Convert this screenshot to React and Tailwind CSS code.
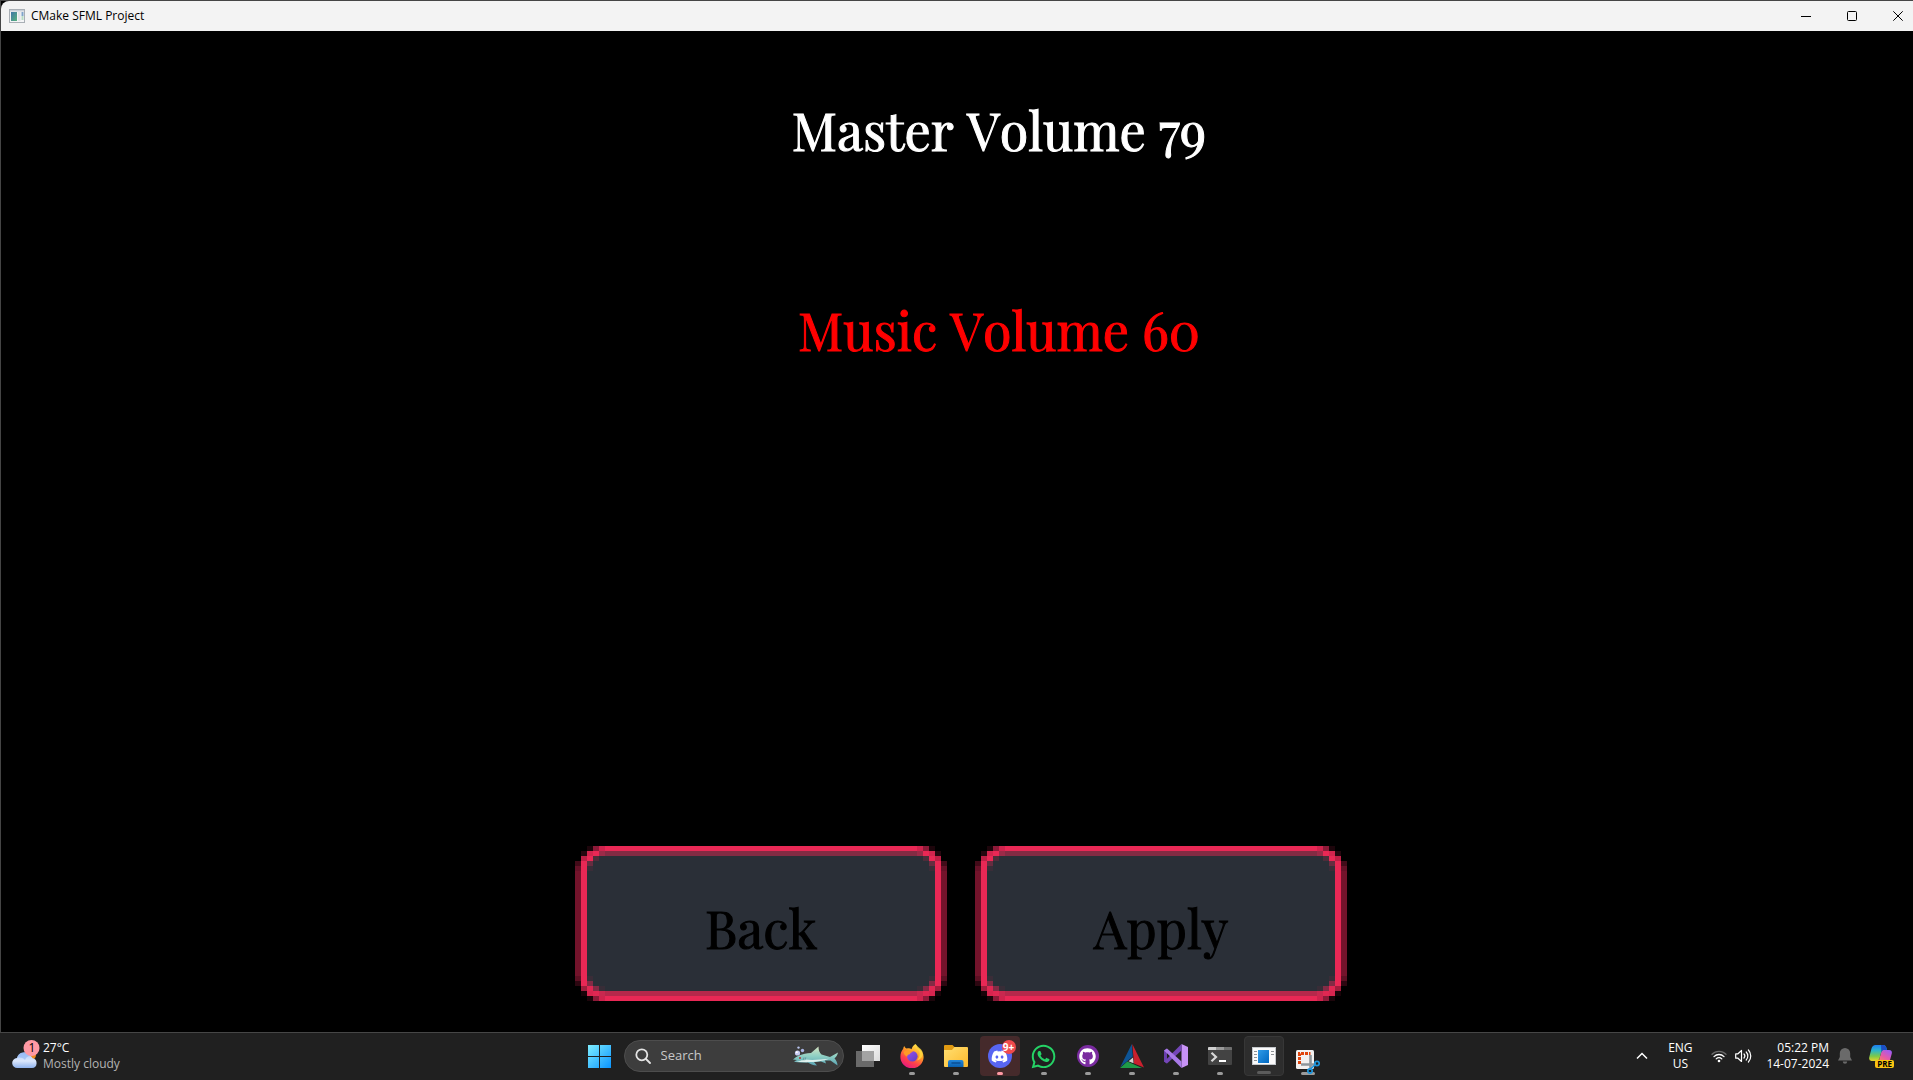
import { FaDiscord, FaGithub, FaWhatsapp } from "react-icons/fa";

const BRIGHT = "#e92855";

// Frame pixels of the left half; the right half mirrors them. [column, row, height, colour]
const EDGE = [
  [2, 0, 1, "#1d050b"], [3, 0, 1, "#8d1a38"], [4, 0, 1, "#cf234d"],
  [1, 1, 1, "#250810"], [2, 1, 1, "#d2254e"], [3, 1, 1, BRIGHT], [4, 1, 1, "#9c2a48"],
  [1, 2, 1, "#bd2046"], [2, 2, 1, BRIGHT], [3, 2, 1, "#4d2d3a"],
  [0, 3, 1, "#430b19"], [2, 3, 1, "#672d40"],
  [0, 4, 1, "#651127"], [2, 4, 1, "#3a2d38"],
  [0, 5, 21, "#73132b"], [1, 3, 25, BRIGHT],
  [0, 26, 1, "#5c1023"], [2, 26, 1, "#3a2d38"],
  [0, 27, 1, "#2d0711"], [2, 27, 1, "#832b45"],
  [1, 28, 1, "#a01d3c"], [2, 28, 1, "#e02752"], [3, 28, 1, "#832b45"], [4, 28, 1, "#382d37"],
  [1, 29, 1, "#190409"], [2, 29, 1, "#d8254f"], [3, 29, 1, "#e02752"], [4, 29, 1, "#c9284f"],
  [2, 30, 1, "#1d050b"], [3, 30, 1, "#8d1a38"], [4, 30, 1, "#cf234d"],
];

function PixelFrame() {
  return (
    <svg className="absolute inset-0 size-full" viewBox="0 0 62 31" preserveAspectRatio="none" shapeRendering="crispEdges" aria-hidden="true">
      <path d="M5 0H57V1H60V3H61V28H60V30H57V31H5V30H2V28H1V3H2V1H5Z" fill="#2a2f37" />
      <rect x="5" y="0" width="52" height="1" fill={BRIGHT} />
      <rect x="5" y="1" width="52" height="1" fill="#832b43" />
      <rect x="5" y="29" width="52" height="1" fill="#b6284b" />
      <rect x="5" y="30" width="52" height="1" fill={BRIGHT} />
      {EDGE.map(([x, y, h, c]) => (
        <g key={`${x}-${y}`} fill={c}>
          <rect x={x} y={y} width="1" height={h} />
          <rect x={61 - x} y={y} width="1" height={h} />
        </g>
      ))}
    </svg>
  );
}

function GameButton({ children }) {
  return (
    <button type="button" className="relative flex h-[155px] w-[372px] items-center justify-center pt-2 text-black">
      <PixelFrame />
      <span className="relative">{children}</span>
    </button>
  );
}

function TitleBar() {
  return (
    <header className="flex h-[30px] items-center rounded-tl-lg bg-[#f3f3f3] pl-2 text-black">
      <svg className="mr-1.5 h-[14px] w-4" viewBox="0 0 16 14" aria-hidden="true">
        <defs>
          <linearGradient id="appPane" x1="0" y1="0" x2="1" y2="1">
            <stop offset="0" stopColor="#3f76a8" />
            <stop offset="1" stopColor="#57b27c" />
          </linearGradient>
        </defs>
        <rect x=".5" y=".5" width="15" height="13" fill="#f4f5f6" stroke="#a9afb5" />
        <rect x="1" y="1" width="14" height="1.5" fill="#c9d0d8" />
        <rect x="2" y="3" width="6" height="9" fill="url(#appPane)" />
        <rect x="9" y="3" width="2.5" height="9" fill="#e2e5e8" />
        <rect x="12.5" y="3" width="2" height="4" fill="#7fa3c9" />
        <rect x="12.5" y="7" width="2" height="4" fill="#b7dcc3" />
      </svg>
      <h1 className="flex-1 text-xs">CMake SFML Project</h1>
      <div className="flex h-full gap-4">
        <button type="button" aria-label="Minimize" className="flex w-[30px] items-center justify-center">
          <svg width="10" height="10" viewBox="0 0 10 10" fill="none" stroke="#000"><path d="M0 5.5H10" /></svg>
        </button>
        <button type="button" aria-label="Maximize" className="flex w-[30px] items-center justify-center">
          <svg width="10" height="10" viewBox="0 0 10 10" fill="none" stroke="#000"><rect x=".5" y=".5" width="9" height="9" rx="1" /></svg>
        </button>
        <button type="button" aria-label="Close" className="flex w-[30px] items-center justify-center">
          <svg width="10" height="10" viewBox="0 0 10 10" fill="none" stroke="#000"><path d="M.3.3l9.4 9.4M9.7.3L.3 9.7" /></svg>
        </button>
      </div>
    </header>
  );
}

function WeatherIcon() {
  return (
    <svg width="28" height="32" viewBox="0 0 28 32" aria-hidden="true">
      <defs>
        <linearGradient id="cloud" x1="0" y1="0" x2="0" y2="1">
          <stop offset="0" stopColor="#a9caff" />
          <stop offset=".55" stopColor="#dbe7fb" />
          <stop offset="1" stopColor="#8fb3ee" />
        </linearGradient>
      </defs>
      <circle cx="19" cy="15" r="5" fill="#f08a1d" />
      <path d="M5.5 28a5 5 0 0 1-.6-10A7.5 7.5 0 0 1 18.6 16a5 5 0 0 1 2 2.3A4.9 4.9 0 0 1 20 28Z" fill="url(#cloud)" />
      <path d="M5 18a7.5 7.5 0 0 1 13.6-2c-3 0-4.6 1.6-5.6 4-2.5-2.5-5-2.8-8-2Z" fill="#86aef0" opacity=".55" />
      <circle cx="19.5" cy="8" r="8" fill="#ff99a4" />
    </svg>
  );
}

function Shark() {
  return (
    <svg width="46" height="20" viewBox="0 0 46 20" aria-hidden="true">
      <defs>
        <linearGradient id="shark" x1="0" y1="0" x2="0" y2="1">
          <stop offset="0" stopColor="#d6e2c0" />
          <stop offset=".5" stopColor="#8fd0c4" />
          <stop offset="1" stopColor="#5aa3b4" />
        </linearGradient>
      </defs>
      <path d="M0 13.5C3 10.5 9 7.5 18 7L25.5.5C25.5 4 26.5 7 28.5 8.5L37 11 45 6.5C44.5 9 43 11 41.5 12.5 43 14 44.5 16.5 44.5 19.5L37.5 14.5 32 14.5 33 17.5 28 15.5 21 16 24 19.5C20 19.5 17 18 15 16.5 9 16.8 3 16.5 1 15.5L4 14Z" fill="url(#shark)" />
      <path d="M2 15.5C7 15.5 9 14 12 13.5 20 14.5 28 13.5 36 12.8 28 16 14 17 2 15.5Z" fill="#dff2ee" />
      <path d="M11 11.5l-1 3M12.8 11.3l-1 3" stroke="#47818c" strokeWidth=".6" />
      <circle cx="7" cy="12" r=".9" fill="#b02323" />
      <circle cx="4.5" cy="7" r="2.6" fill="#c8cbf2" />
      <circle cx="3.8" cy="6.2" r="1" fill="#fff" />
      <circle cx="9.5" cy="4.5" r="1.7" fill="#aab6e6" />
      <circle cx="5.5" cy="1.6" r="1.2" fill="#b9c4ee" />
    </svg>
  );
}

const Start = () => (
  <svg width="23" height="23" viewBox="0 0 23 23" aria-hidden="true">
    <defs>
      <linearGradient id="win" gradientUnits="userSpaceOnUse" x1="0" y1="0" x2="23" y2="23">
        <stop offset="0" stopColor="#7eeeff" />
        <stop offset="1" stopColor="#0a94ff" />
      </linearGradient>
    </defs>
    <path d="M0 0H11V11H0ZM12 0H23V11H12ZM0 12H11V23H0ZM12 12H23V23H12Z" fill="url(#win)" />
  </svg>
);

const TaskView = () => (
  <svg width="24" height="24" viewBox="0 0 24 24" aria-hidden="true">
    <defs>
      <linearGradient id="tvA" x1="0" y1="0" x2="1" y2="1">
        <stop offset="0" stopColor="#fff" />
        <stop offset="1" stopColor="#dcdcdc" />
      </linearGradient>
    </defs>
    <path d="M6 1H24V17H6Z" fill="url(#tvA)" />
    <path d="M0 7H18V23H0Z" fill="#6a6a6a" />
    <path d="M6 7H18V17H6Z" fill="#a3a3a3" />
  </svg>
);

const Firefox = () => (
  <svg width="24" height="24" viewBox="0 0 24 24" aria-hidden="true">
    <defs>
      <linearGradient id="ffA" x1=".8" y1="0" x2=".25" y2="1">
        <stop offset="0" stopColor="#fff04f" />
        <stop offset=".4" stopColor="#ff9a26" />
        <stop offset=".7" stopColor="#ff3f4c" />
        <stop offset="1" stopColor="#e31587" />
      </linearGradient>
      <linearGradient id="ffB" x1="0" y1="0" x2="1" y2="1">
        <stop offset="0" stopColor="#9a4df0" />
        <stop offset="1" stopColor="#5b3fc4" />
      </linearGradient>
    </defs>
    <path d="M15.5 0c1.2 1.3 1.6 2.8 3 4.2C21.5 6.8 23.6 9 23.6 13A11.6 11.3 0 0 1 .4 13C.4 9.5 1.5 7 3.2 4.8 3.3 3.8 3.7 2.8 4.3 2c.6 1.5 1.4 2.2 2.5 2.6C9 4 10.5 4.5 11.5 5.2 12 3 13.5 1.3 15.5 0Z" fill="url(#ffA)" />
    <circle cx="12.3" cy="12.3" r="5.3" fill="url(#ffB)" />
    <path d="M3.6 8c2-1.8 4.5-1.8 6.4-.8 1.2-.6 2.6-.2 3.4.5-2.6.5-3.2 1.6-3.6 2.6-1.5.2-2.7 1-2.7 2.4C5 11.5 3.8 10 3.6 8Z" fill="#ff9a26" />
    <path d="M15.5 0c.5 2 2.5 4 3.5 6.5 1.5 3.5.5 8-2.5 10 5-1 7-5 5.8-9.3C21 4.5 17.5 3 15.5 0Z" fill="#ffd93f" opacity=".8" />
  </svg>
);

const Explorer = () => (
  <svg width="24" height="24" viewBox="0 0 24 24" aria-hidden="true">
    <defs>
      <linearGradient id="fold" x1="0" y1="0" x2="1" y2="1">
        <stop offset="0" stopColor="#ffdf72" />
        <stop offset="1" stopColor="#fdb92b" />
      </linearGradient>
      <linearGradient id="foldB" x1="0" y1="0" x2="0" y2="1">
        <stop offset="0" stopColor="#2287dc" />
        <stop offset="1" stopColor="#0a5fae" />
      </linearGradient>
    </defs>
    <path d="M1 1H8.5L10.5 3H23V8H0V2Q0 1 1 1Z" fill="#e09a12" />
    <path d="M0 6H8L10.5 3H23Q24 3 24 4V22Q24 23 23 23H1Q0 23 0 22Z" fill="url(#fold)" />
    <path d="M4 23V18Q4 16 6 16H17.5Q19.5 16 19.5 18V23Z" fill="url(#foldB)" />
    <path d="M8 19H16" stroke="#0b4f94" strokeWidth="1.5" strokeLinecap="round" />
  </svg>
);

const Discord = () => (
  <span className="relative flex size-6 items-center justify-center rounded-full bg-[#5865f2] text-white">
    <FaDiscord size={17} />
    <span className="absolute -right-1 -top-1 flex size-[14px] items-center justify-center rounded-full bg-[#f04a4d] text-[10px] leading-none font-bold">9+</span>
  </span>
);

const Github = () => (
  <span className="flex size-[22px] items-center justify-center rounded-full bg-[#7a2ba0] text-white">
    <FaGithub size={17} />
  </span>
);

const CMake = () => (
  <svg width="24" height="24" viewBox="0 0 24 24" aria-hidden="true">
    <path d="M11.8 0L12.8 12.5.3 23Z" fill="#0d5495" />
    <path d="M12.3 0L24 23.5 14 19.5Z" fill="#c9202e" />
    <path d="M7.3 17.6L22 24H0Z" fill="#1f9b48" />
    <path d="M13 13.5L13.6 19.3 8.5 17.2Z" fill="#d0d0d0" />
  </svg>
);

const VisualStudio = () => (
  <svg width="24" height="24" viewBox="0 0 24 24" aria-hidden="true">
    <path d="M17.5 0L24 3V21L17.5 24Z" fill="#c792f5" />
    <path d="M0 6.5L3 4.5V19.5L0 17.5Z" fill="#6a3fae" />
    <path d="M3 19.5L17.5 6.5V0L0 17.5Z" fill="#7446b8" />
    <path d="M3 4.5L17.5 17.5V24L0 6.5Z" fill="#a97ae8" />
    <path d="M3 9.5L5.7 12 3 14.5Z" fill="#202020" />
  </svg>
);

const Terminal = () => (
  <svg width="24" height="18" viewBox="0 0 24 18" aria-hidden="true">
    <rect width="24" height="18" rx="1" fill="#434343" />
    <path d="M0 3V1Q0 0 1 0H8V3Z" fill="#cfcfcf" />
    <path d="M8 0H16V3H8Z" fill="#999" />
    <path d="M16 0H23Q24 0 24 1V3H16Z" fill="#707070" />
    <path d="M3.5 5.8L8 10 3.5 14.2" fill="none" stroke="#d8d8d8" strokeWidth="2.2" />
    <path d="M11 14H18" stroke="#fff" strokeWidth="2" />
  </svg>
);

const AppWindow = () => (
  <svg width="24" height="18" viewBox="0 0 24 18" aria-hidden="true">
    <defs>
      <linearGradient id="appBlue" x1="0" y1="0" x2="1" y2="1">
        <stop offset="0" stopColor="#2f9be8" />
        <stop offset="1" stopColor="#0067c0" />
      </linearGradient>
    </defs>
    <rect width="24" height="18" fill="#fafafa" />
    <path d="M0 .5H24M.5 0V18M23.5 0V18M0 17.5H24" stroke="#c4c8cc" />
    <rect x="6" y="3" width="11" height="13" fill="url(#appBlue)" />
    <path d="M2 4.5H5M2 7.5H5M2 10.5H5M2 13.5H5M19 4.5H22M19 7.5H22" stroke="#8d9296" />
  </svg>
);

const Snip = () => (
  <svg className="mt-3" width="24" height="24" viewBox="0 0 24 24" aria-hidden="true">
    <rect width="18" height="19" rx="1.5" fill="#f1f1f1" />
    <path d="M3.5 14V3.5H14.5" fill="none" stroke="#e0440c" strokeWidth="3" strokeDasharray="3 1" />
    <path d="M5 14.5H20M14.5 5V20" stroke="#8d969c" strokeWidth="2.6" />
    <circle cx="21" cy="13.5" r="2.2" fill="none" stroke="#1b95dd" strokeWidth="1.7" />
    <circle cx="14" cy="21" r="2.2" fill="none" stroke="#1b95dd" strokeWidth="1.7" />
    <path d="M14.5 19L19 14.8" stroke="#1b95dd" strokeWidth="1.7" />
  </svg>
);

const WhatsApp = () => <FaWhatsapp size={27} color="#25d366" />;

const APPS = [
  { name: "Task view", Icon: TaskView, mark: "bg-transparent w-1.5" },
  { name: "Firefox", Icon: Firefox, mark: "bg-[#9a9a9a] w-1.5" },
  { name: "File Explorer", Icon: Explorer, mark: "bg-[#9a9a9a] w-1.5" },
  { name: "Discord", Icon: Discord, mark: "bg-[#ff99a4] w-1.5", tile: "bg-[#452a2b]" },
  { name: "WhatsApp", Icon: WhatsApp, mark: "bg-[#9a9a9a] w-1.5" },
  { name: "GitHub Desktop", Icon: Github, mark: "bg-[#9a9a9a] w-1.5" },
  { name: "CMake", Icon: CMake, mark: "bg-[#9a9a9a] w-1.5" },
  { name: "Visual Studio", Icon: VisualStudio, mark: "bg-[#9a9a9a] w-1.5" },
  { name: "Terminal", Icon: Terminal, mark: "bg-[#9a9a9a] w-1.5" },
  { name: "CMake SFML Project", Icon: AppWindow, mark: "bg-[#5c5c5c] w-3.5", tile: "bg-[#2d2d2d] border border-[#373737]" },
  { name: "Snipping Tool", Icon: Snip, mark: "bg-[#9a9a9a] w-3.5" },
];

function AppButton({ name, Icon, mark, tile = "" }) {
  return (
    <button type="button" aria-label={name} className={`relative flex size-10 items-center justify-center rounded ${tile}`}>
      <span className={`absolute bottom-px h-[3px] rounded-full ${mark}`} />
      <span className="relative">
        <Icon />
      </span>
    </button>
  );
}

function Tray() {
  return (
    <div className="flex items-center justify-end pr-5 text-xs leading-4">
      <button type="button" aria-label="Show hidden icons" className="flex w-8 justify-center">
        <svg width="12" height="8" viewBox="0 0 12 8" fill="none" stroke="#fff" strokeWidth="1.5"><path d="M1 6.5L6 1.5 11 6.5" /></svg>
      </button>
      <button type="button" className="w-11 text-center">ENG<br />US</button>
      <button type="button" aria-label="Network and volume" className="flex w-[58px] items-center justify-center gap-2">
        <svg width="16" height="13" viewBox="0 0 16 13" fill="none" stroke="#fff" strokeWidth="1.3" strokeLinecap="round">
          <path d="M1 4.3a9.8 9.8 0 0 1 14 0" stroke="#6b6b6b" />
          <path d="M3 6.6a7 7 0 0 1 10 0M5.2 8.9a4 4 0 0 1 5.6 0" />
          <circle cx="8" cy="11" r="1.3" fill="#fff" stroke="none" />
        </svg>
        <svg width="17" height="14" viewBox="0 0 17 14" fill="none" stroke="#fff" strokeWidth="1.2" strokeLinecap="round" strokeLinejoin="round">
          <path d="M.7 4.8H3L6.5 1.5V12.5L3 9.2H.7Z" />
          <path d="M9 5a3 3 0 0 1 0 4M11.2 3a5.8 5.8 0 0 1 0 8M13.4 1a8.8 8.8 0 0 1 0 12" />
        </svg>
      </button>
      <button type="button" className="ml-1.5 text-right">05:22 PM<br />14-07-2024</button>
      <button type="button" aria-label="Notifications" className="ml-2 flex w-4 justify-center">
        <svg width="14" height="16" viewBox="0 0 14 16" fill="#6a6a6a"><path d="M7 0a5.2 5.2 0 0 1 5.2 5.2V9L14 12.5H0L1.8 9V5.2A5.2 5.2 0 0 1 7 0ZM4.8 13.5H9.2A2.2 2.2 0 0 1 4.8 13.5Z" /></svg>
      </button>
      <button type="button" aria-label="Copilot" className="relative ml-4 flex w-6 justify-center">
        <svg width="24" height="24" viewBox="0 0 24 24">
          <defs>
            <linearGradient id="cpA" x1="0" y1="0" x2="0" y2="1">
              <stop offset="0" stopColor="#1f7df0" />
              <stop offset=".35" stopColor="#2cb6c9" />
              <stop offset=".7" stopColor="#7cc94a" />
              <stop offset="1" stopColor="#e8d52a" />
            </linearGradient>
            <linearGradient id="cpB" x1=".8" y1="0" x2=".2" y2="1">
              <stop offset="0" stopColor="#9d5cf5" />
              <stop offset=".5" stopColor="#e659a8" />
              <stop offset="1" stopColor="#ff8a55" />
            </linearGradient>
          </defs>
          <path d="M14 6H20Q23.5 6 22.8 9.5L21 16Q20 20 16 20H9L12 9Q12.8 6 14 6Z" fill="url(#cpB)" />
          <path d="M6.5 1H14.5Q17 1 18 6H14.5Q12.8 6 12 9L10.5 14.5Q9.8 17 7 17H2.5Q-.5 17 .3 13L2.5 4.5Q3.5 1 6.5 1Z" fill="url(#cpA)" />
          <path d="M12 1H14.5Q17 1 18 6H14.5Q13 6 12.3 8Z" fill="#1c4fc4" />
        </svg>
        <span className="absolute -right-px bottom-0 rounded-xs bg-[#fbc412] px-0.5 text-[8px] leading-[8px] font-bold text-black">PRE</span>
      </button>
    </div>
  );
}

function Taskbar() {
  return (
    <footer className="grid h-12 grid-cols-[1fr_auto_1fr] items-center border-t border-[#464646] bg-[#202020] pb-px text-white">
      <button type="button" className="flex items-center justify-self-start pl-3 text-left text-xs leading-4">
        <span className="relative mr-[3px]">
          <WeatherIcon />
          <span className="absolute left-3 top-0 w-4 text-center text-black">1</span>
        </span>
        <span>
          27°C
          <br />
          <span className="text-[#b4b4b4]">Mostly cloudy</span>
        </span>
      </button>
      <nav className="flex items-center gap-1 pr-1.5" aria-label="Taskbar">
        <button type="button" aria-label="Start" className="flex size-10 items-center justify-center"><Start /></button>
        <label className="flex h-8 w-[220px] items-center rounded-full border border-[#4d4d4d] bg-[#3d3d3d] pr-1 pl-2.5">
          <svg width="16" height="16" viewBox="0 0 16 16" fill="none" stroke="#e4e4e4" strokeWidth="1.8" strokeLinecap="round" aria-hidden="true">
            <circle cx="6.8" cy="6.8" r="5.5" />
            <path d="M11 11L15 15" />
          </svg>
          <input type="text" aria-label="Search" placeholder="Search" className="ml-2.5 min-w-0 flex-1 bg-transparent text-[13px] outline-none placeholder:text-[#c8c8c8]" />
          <Shark />
        </label>
        {APPS.map((app) => (
          <AppButton key={app.name} {...app} />
        ))}
      </nav>
      <Tray />
    </footer>
  );
}

export default function App() {
  return (
    <div className="flex min-h-screen flex-col bg-black font-['Open_Sans','Noto_Sans',sans-serif]">
      <div className="flex flex-1 flex-col border-t border-l border-[#454545]">
        <TitleBar />
        <main className="flex flex-1 flex-col font-['Playfair_Display','Liberation_Serif',serif] text-[52px] leading-[60px] [font-kerning:none] [-webkit-text-stroke:1px_currentColor]">
          <div className="flex flex-col items-center gap-[140px] pt-[69px] pl-[84px]">
            <p className="text-white">Master Volume 79</p>
            <p className="text-[#ff0000]">Music Volume 60</p>
          </div>
          <div className="mt-auto flex justify-center gap-7 pb-[31px] pl-2">
            <GameButton>Back</GameButton>
            <GameButton>Apply</GameButton>
          </div>
        </main>
      </div>
      <Taskbar />
    </div>
  );
}
